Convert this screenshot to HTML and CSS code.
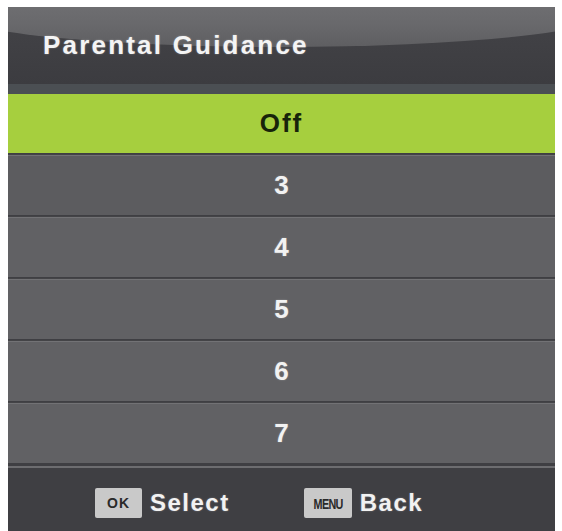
FILE: index.html
```html
<!DOCTYPE html>
<html>
<head>
<meta charset="utf-8">
<link rel="stylesheet" href="styles.css">
</head>
<body>
<div class="screen">
  <div class="header">
    <div class="title">Parental Guidance</div>
  </div>
  <div class="list">
    <div class="item selected">Off</div>
    <div class="item">3</div>
    <div class="item">4</div>
    <div class="item">5</div>
    <div class="item">6</div>
    <div class="item">7</div>
  </div>
  <div class="footer">
    <div class="hint"><span class="key key-ok">OK</span><span class="hint-label">Select</span></div>
    <div class="hint"><span class="key key-menu"><span class="menu-text">MENU</span></span><span class="hint-label">Back</span></div>
  </div>
</div>
</body>
</html>
```

FILE: styles.css
```css
html, body {
  margin: 0;
  padding: 0;
  background: #ffffff;
}
.screen {
  margin: 7px 7px 0 8px;
  width: 547px;
  height: 524px;
  display: flex;
  flex-direction: column;
  font-family: "Liberation Sans", Arial, sans-serif;
  font-weight: bold;
  background: #3f3f43;
  overflow: hidden;
}
.header {
  position: relative;
  height: 77px;
  background: linear-gradient(to bottom, #444448 0%, #3c3c40 100%);
  border-bottom: 10px solid #4b4f53;
  overflow: hidden;
  display: flex;
  align-items: flex-start;
}
.header::before {
  content: "";
  position: absolute;
  left: -57px;
  top: -30px;
  width: 660px;
  height: 70px;
  border-radius: 50%;
  background: linear-gradient(to bottom, #767679 0%, #68686b 70%, #5e5e61 100%);
}
.title {
  position: relative;
  margin: 23px 0 0 35px;
  font-size: 26px;
  letter-spacing: 2.2px;
  color: #f4f4f4;
  text-shadow: 0 0 2px rgba(255,255,255,0.35);
}
.list {
  display: flex;
  flex-direction: column;
}
.item {
  height: 60px;
  display: flex;
  align-items: center;
  justify-content: center;
  font-size: 26px;
  color: #f2f2f2;
  background: #616164;
  border-top: 1px solid #444447;
  box-shadow: inset 0 1px 0 #727275;
  text-shadow: 0 0 2px rgba(255,255,255,0.3);
}
.item:nth-child(2) {
  background: #5c5c5f;
}
.item.selected {
  height: 59px;
  border-top: none;
  box-shadow: none;
  background: #a6cf3e;
  color: #17240a;
  text-shadow: none;
  letter-spacing: 2px;
}
.item + .item {
  margin-top: 1px;
}
.footer {
  flex: 1;
  border-top: 2px solid #6d6d70;
  margin-top: 3px;
  background: #3f3f43;
  display: flex;
  align-items: center;
  justify-content: flex-start;
  padding: 7px 0 0 87px;
  gap: 74px;
}
.hint {
  display: flex;
  align-items: center;
  gap: 8px;
}
.key {
  display: flex;
  align-items: center;
  justify-content: center;
  height: 30px;
  background: #c9c9c9;
  border-radius: 2px;
  color: #2a2a2a;
  font-size: 14px;
  letter-spacing: 1px;
}
.key-ok {
  width: 47px;
}
.key-menu {
  width: 48px;
  font-size: 15px;
  letter-spacing: -1px;
}
.menu-text {
  display: inline-block;
  transform: scaleX(0.72);
}
.hint-label {
  font-size: 24px;
  letter-spacing: 1.5px;
  color: #f2f2f2;
  text-shadow: 0 0 2px rgba(255,255,255,0.3);
}
```
